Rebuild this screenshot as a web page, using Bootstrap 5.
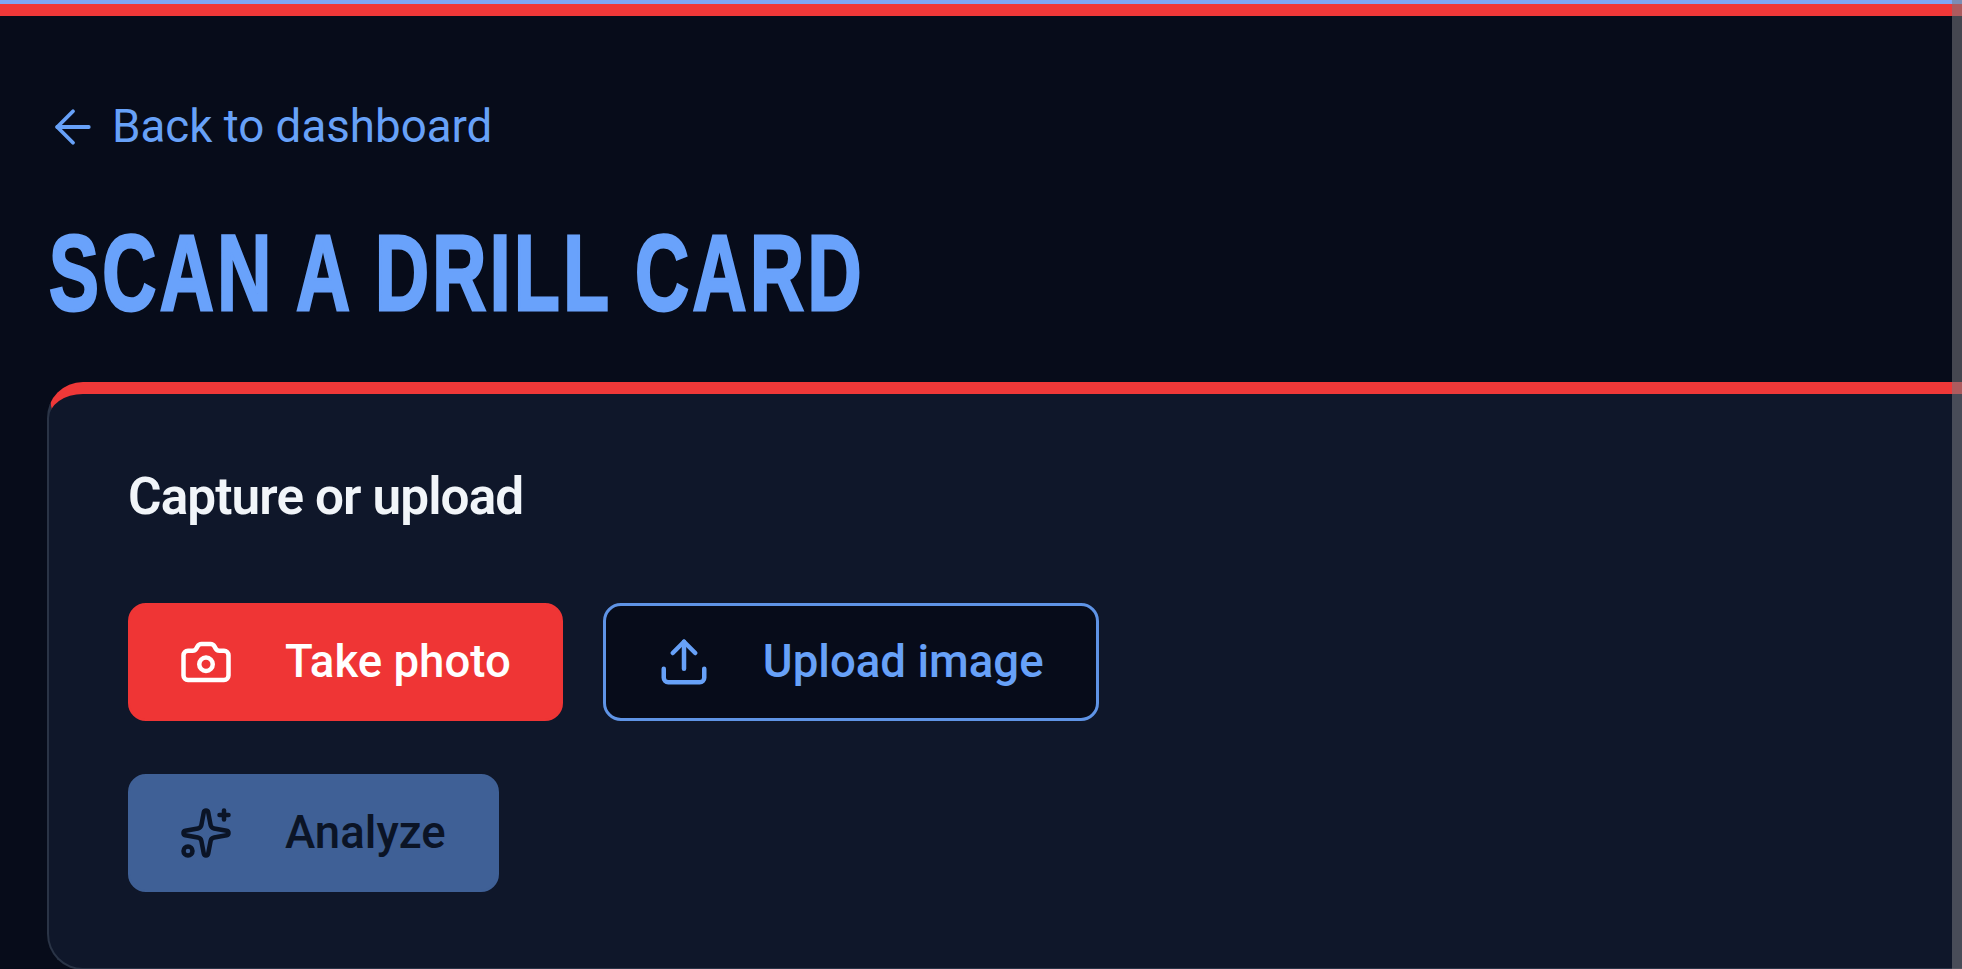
<!DOCTYPE html>
<html lang="en">
<head>
<meta charset="utf-8">
<title>Scan a drill card</title>
<link href="https://cdn.jsdelivr.net/npm/bootstrap@5.3.0/dist/css/bootstrap.min.css" rel="stylesheet">
<style>
html, body { height: 100%; overflow: hidden; }
body { background: #070c1a; font-family: Roboto, "Liberation Sans", sans-serif; }
.top-strip { height: 16px; background: #ef3838; border-top: 4px solid #7ea6f5; }
.page-wrap { padding: 84px 0 0 47px; }
.back-link { color: #67a1f8; font-size: 45.7px; line-height: 54px; font-weight: 400; gap: 12px; margin-left: -1px; }
.ic { width: 54px; height: 54px; flex: none; fill: none; stroke: currentColor; stroke-width: 2; stroke-linecap: round; stroke-linejoin: round; }
.ic-thin { stroke-width: 1.7; }
.scan-title { font-family: "Liberation Sans Narrow", "Liberation Sans", sans-serif; font-weight: 700; font-size: 108px; line-height: 130px; color: #69a2fb; letter-spacing: 5px; margin: 47px 0 44px 2px; transform-origin: left center; transform: scaleX(.692); white-space: nowrap; -webkit-text-stroke: 3px #69a2fb; }
.capture-panel { background: #0f172a; border: 2px solid #2a3446; border-top: 12px solid #ef3838; border-right: 0; border-radius: 36px 0 0 36px; padding: 73px 0 76px 79px; }
.panel-head { font-size: 51.3px; line-height: 60px; font-weight: 600; color: #f1f5f9; letter-spacing: -.9px; margin: 0 0 76px; }
.act-stack { gap: 53px; }
.act-row { gap: 40px; }
.act-btn { font-size: 45.6px; font-weight: 500; height: 118px; padding: 0 50px 0 49px; border-radius: 18px; gap: 52px; border-width: 2.5px; }
.act-red { background: #ef3535; border-color: #ef3535; color: #fff; }
.act-line { background: #070c1a; border-color: #5f94e6; color: #67a1f8; padding: 0 52px 0 51px; border-width: 3px; }
.act-off, .act-off:disabled { background: #3f6096; border-color: #3f6096; color: #0b1426; opacity: 1; padding-right: 51px; }
.scroll-strip { position: fixed; top: 0; right: 0; bottom: 0; width: 10px; background: rgba(120,120,125,.55); }
</style>
</head>
<body>
<div class="top-strip"></div>
<main class="page-wrap">
  <a href="#" class="back-link d-inline-flex align-items-center text-decoration-none">
    <svg class="ic ic-thin" viewBox="0 0 24 24"><path d="m12 19-7-7 7-7"/><path d="M19 12H5"/></svg>
    <span>Back to dashboard</span>
  </a>
  <h1 class="scan-title">SCAN A DRILL CARD</h1>
  <section class="capture-panel">
    <h2 class="panel-head">Capture or upload</h2>
    <div class="d-flex flex-column align-items-start act-stack">
      <div class="d-flex act-row">
        <button class="btn act-btn act-red d-flex align-items-center">
          <svg class="ic" viewBox="0 0 24 24"><path d="M13.997 4a2 2 0 0 1 1.76 1.05l.486.9A2 2 0 0 0 18.003 7H20a2 2 0 0 1 2 2v9a2 2 0 0 1-2 2H4a2 2 0 0 1-2-2V9a2 2 0 0 1 2-2h1.997a2 2 0 0 0 1.759-1.048l.489-.904A2 2 0 0 1 10.004 4z"/><circle cx="12" cy="13" r="3"/></svg>
          Take photo
        </button>
        <button class="btn act-btn act-line d-flex align-items-center">
          <svg class="ic" viewBox="0 0 24 24"><path d="M12 3v12"/><path d="m17 8-5-5-5 5"/><path d="M21 15v4a2 2 0 0 1-2 2H5a2 2 0 0 1-2-2v-4"/></svg>
          Upload image
        </button>
      </div>
      <button class="btn act-btn act-off d-flex align-items-center" disabled>
        <svg class="ic" viewBox="0 0 24 24"><path d="M11.017 2.814a1 1 0 0 1 1.966 0l1.051 5.558a2 2 0 0 0 1.594 1.594l5.558 1.051a1 1 0 0 1 0 1.966l-5.558 1.051a2 2 0 0 0-1.594 1.594l-1.051 5.558a1 1 0 0 1-1.966 0l-1.051-5.558a2 2 0 0 0-1.594-1.594l-5.558-1.051a1 1 0 0 1 0-1.966l5.558-1.051a2 2 0 0 0 1.594-1.594z"/><path d="M20 2v4"/><path d="M22 4h-4"/><circle cx="4" cy="20" r="2"/></svg>
        Analyze
      </button>
    </div>
  </section>
</main>
<div class="scroll-strip"></div>
<script src="https://cdn.jsdelivr.net/npm/bootstrap@5.3.0/dist/js/bootstrap.bundle.min.js"></script>
</body>
</html>
